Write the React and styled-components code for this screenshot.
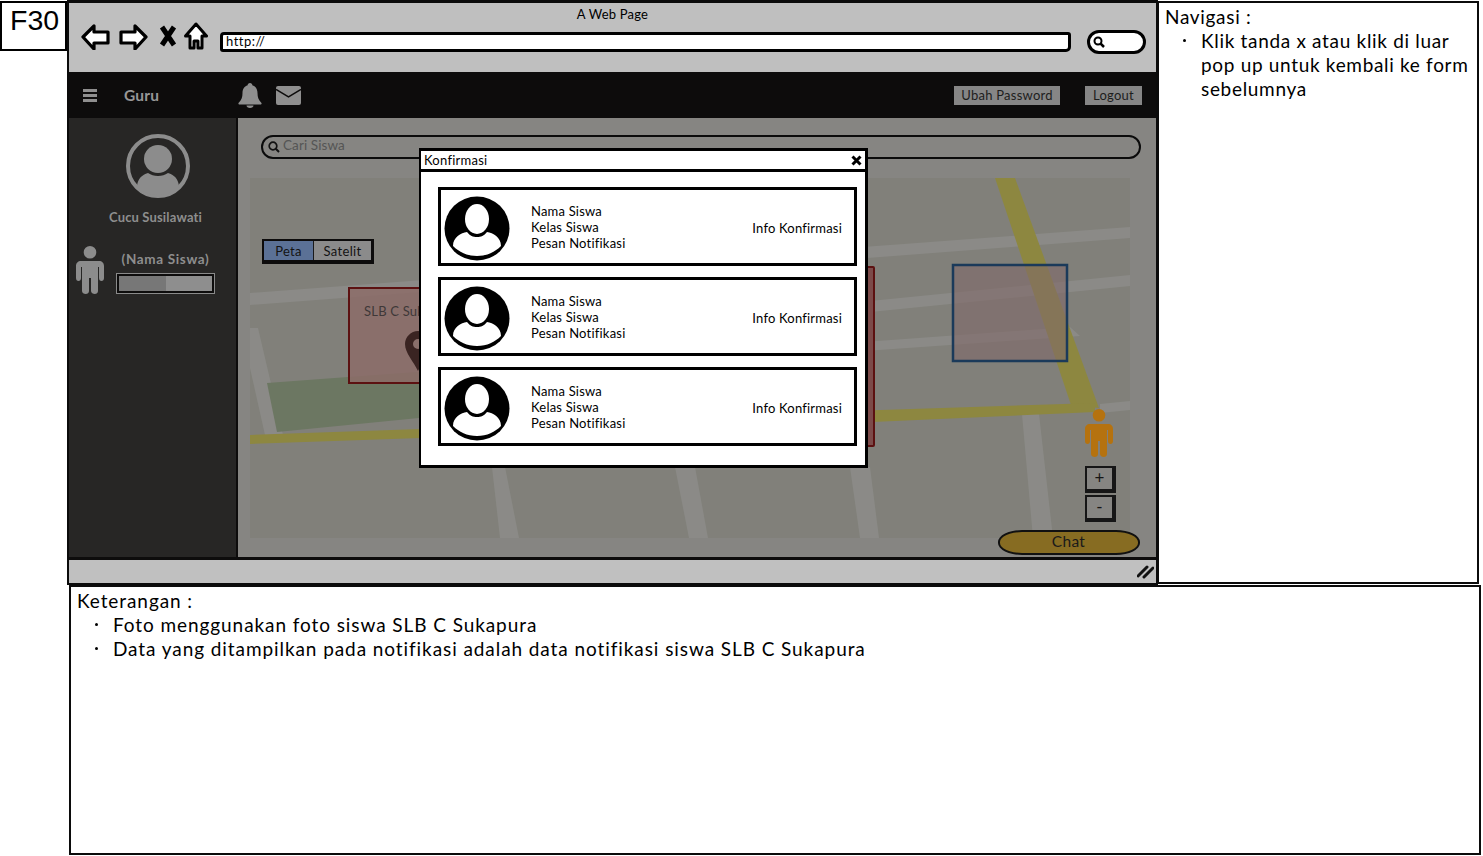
import React from "react";
import styled, { createGlobalStyle } from "styled-components";

const Global = createGlobalStyle`
  html, body { margin: 0; padding: 0; background: #fff; }
  body { font-family: "Lato", "Noto Sans", sans-serif; color: #000; overflow: hidden; }
`;

const Page = styled.div`
  width: 1483px;
  height: 856px;
  display: flex;
  flex-direction: column;
  background: #fff;
`;
const TopRow = styled.div`
  display: flex;
  height: 585px;
  align-items: flex-start;
`;
const Tag = styled.div`
  box-sizing: border-box;
  width: 67px;
  height: 50px;
  margin-top: 1px;
  border: 2px solid #000;
  font: 28.500px/30px "Liberation Sans", sans-serif;
  padding: 2px 0 0 8px;
`;
const Browser = styled.div`
  box-sizing: border-box;
  position: relative;
  width: 1091px;
  height: 585px;
  border: 2px solid #0b0b0b;
  display: flex;
  flex-direction: column;
`;
const TitleBar = styled.div`
  position: relative;
  box-sizing: border-box;
  height: 70px;
  background: #bfbfbf;
  display: flex;
  align-items: flex-start;
  padding: 21px 10px 0 12px;
  flex-shrink: 0;
  border-top: 1px solid #0b0b0b;
`;
const TitleText = styled.div`
  position: absolute;
  top: 3px;
  left: 0;
  right: 0;
  text-align: center;
  font-size: 13px;
  line-height: 16px;
  letter-spacing: 0.2px;
`;
const NavIcons = styled.div`
  display: flex;
  align-items: flex-start;
  width: 139px;
  flex-shrink: 0;
`;
const NavSvg = styled.svg`
  display: block;
  flex-shrink: 0;
  margin-right: ${(p) => p.$gap || 0}px;
`;
const UrlBar = styled.div`
  box-sizing: border-box;
  width: 852px;
  height: 20px;
  margin-top: 8px;
  background: #fff;
  border: 3px solid #000;
  border-radius: 4px 3px 5px 3px;
  font: 13px/13px "Lato", sans-serif;
  padding-left: 3px;
  letter-spacing: 0.5px;
`;
const SearchPill = styled.div`
  box-sizing: border-box;
  width: 59px;
  height: 24px;
  margin: 6px 0 0 16px;
  background: #fff;
  border: 3px solid #000;
  border-radius: 13px;
  display: flex;
  align-items: center;
  padding-left: 3px;
`;
const AppBar = styled.div`
  box-sizing: border-box;
  height: 46px;
  background: #0d0c0c;
  display: flex;
  align-items: center;
  padding: 0 14px 0 14px;
  flex-shrink: 0;
`;
const Burger = styled.div`
  width: 14px;
  display: flex;
  flex-direction: column;
  gap: 2px;
  margin-top: 1px;
  span { display: block; height: 3px; background: #8f8f8f; }
`;
const Brand = styled.div`
  margin-left: 27px;
  width: 114px;
  color: #979797;
  font-size: 15.500px;
  font-weight: 700;
  letter-spacing: 0.2px;
`;
const BarIcons = styled.div`
  display: flex;
  align-items: center;
  gap: 14px;
  flex: 1;
`;
const BarButton = styled.div`
  box-sizing: border-box;
  height: 19px;
  background: #868686;
  color: #1d1d1d;
  font-size: 13px;
  line-height: 19px;
  text-align: center;
  width: ${(p) => p.$w}px;
  margin-left: ${(p) => p.$ml}px;
  letter-spacing: 0.25px;
`;
const Body = styled.div`
  flex: 1;
  display: flex;
  min-height: 0;
`;
const Sidebar = styled.div`
  box-sizing: border-box;
  width: 169px;
  background: #272625;
  border-right: 2px solid #0d0c0c;
  display: flex;
  flex-direction: column;
  flex-shrink: 0;
  padding-top: 16px;
`;
const SideAvatar = styled.div`
  display: flex;
  justify-content: center;
  padding-left: 10px;
`;
const SideName = styled.div`
  text-align: center;
  color: #8e8e8e;
  font-size: 13px;
  font-weight: 700;
  line-height: 16px;
  margin-top: 11px;
  padding-left: 6px;
  letter-spacing: 0.15px;
`;
const StudentRow = styled.div`
  display: flex;
  align-items: flex-start;
  margin-top: 21px;
  padding-left: 7px;
`;
const StudentInfo = styled.div`
  margin-left: 13px;
  width: 97px;
`;
const StudentName = styled.div`
  text-align: center;
  color: #8e8e8e;
  font-size: 13.500px;
  font-weight: 700;
  line-height: 16px;
  margin-top: 5px;
  letter-spacing: 0.65px;
`;
const Progress = styled.div`
  box-sizing: border-box;
  height: 19px;
  margin-top: 7px;
  border: 2px solid #0d0c0c;
  outline: 1px solid #8a8a8a;
  background: #8e8e8e;
  span { display: block; height: 100%; width: 50%; background: #777; }
`;
const Main = styled.div`
  flex: 1;
  background: #868582;
  box-sizing: border-box;
  padding: 17px 15px 0 23px;
  display: flex;
  flex-direction: column;
  min-width: 0;
`;
const SearchField = styled.div`
  box-sizing: border-box;
  height: 24px;
  border: 2px solid #0b0b0b;
  border-radius: 12px;
  display: flex;
  align-items: center;
  padding-left: 5px;
  gap: 3px;
  color: #555;
  font-size: 13.500px;
  letter-spacing: 0.1px;
  span { margin-top: -4px; }
`;
const MapCanvas = styled.div`
  position: relative;
  width: 880px;
  height: 360px;
  margin: 19px 0 0 -11px;
  flex-shrink: 0;
`;
const MapArt = styled.svg`
  position: absolute;
  inset: 0;
  display: block;
`;
const Tabs = styled.div`
  position: absolute;
  left: 12px;
  top: 61px;
  display: flex;
  box-sizing: border-box;
  height: 25px;
  border: 2px solid #0d0c0c;
  border-width: 2px 3px 4px 2px;
  font-size: 13px;
  letter-spacing: 0.3px;
`;
const Tab = styled.div`
  box-sizing: border-box;
  width: ${(p) => p.$w}px;
  background: ${(p) => (p.$on ? "#5b7196" : "#8b8b8b")};
  color: #131313;
  text-align: center;
  line-height: 20px;
  border-left: ${(p) => (p.$on ? "none" : "1px solid #1a1a1a")};
`;
const SchoolBlock = styled.div`
  position: absolute;
  left: 98px;
  top: 109px;
  box-sizing: border-box;
  width: 131px;
  height: 97px;
  border: 2px solid #5c1111;
  background: rgba(140, 108, 104, 0.85);
  color: #3e3838;
  font: 13px/16px "Lato", sans-serif;
  padding: 14px 0 0 14px;
  letter-spacing: 0.2px;
  overflow: hidden;
`;
const Pin = styled.svg`
  position: absolute;
  left: 55px;
  top: 42px;
`;
const SideBlock = styled.div`
  position: absolute;
  left: 560px;
  top: 88px;
  box-sizing: border-box;
  width: 65px;
  height: 181px;
  border: 2px solid #5c1111;
  border-radius: 2px;
  background: #7c4b4a;
`;
const Walker = styled.svg`
  position: absolute;
  left: 835px;
  top: 231px;
`;
const ZoomBtn = styled.div`
  position: absolute;
  left: 835px;
  top: ${(p) => p.$top}px;
  box-sizing: border-box;
  width: 31px;
  height: 27px;
  background: #868582;
  border: 2px solid #161616;
  border-width: 2px 4px 4px 2px;
  text-align: center;
  font-size: 17px;
  line-height: 20px;
  color: #161616;
`;
const ChatPill = styled.div`
  position: absolute;
  left: 748px;
  top: 352px;
  box-sizing: border-box;
  width: 142px;
  height: 25px;
  background: #876c22;
  border: 2px solid #111;
  border-radius: 24px / 12px;
  text-align: center;
  font-size: 15.500px;
  line-height: 18px;
  color: #1a1a1a;
  letter-spacing: 0.3px;
  padding-right: 1px;
`;
const StatusBar = styled.div`
  box-sizing: border-box;
  height: 26px;
  background: #c0c0c0;
  border-top: 3px solid #0d0c0c;
  display: flex;
  justify-content: flex-end;
  align-items: center;
  padding-right: 2px;
  flex-shrink: 0;
`;
const Modal = styled.div`
  position: absolute;
  left: 350px;
  top: 146px;
  box-sizing: border-box;
  width: 449px;
  height: 320px;
  background: #fff;
  border: 3px solid #000;
  border-width: 3px 3px 3px 2px;
`;
const ModalHead = styled.div`
  box-sizing: border-box;
  height: 21px;
  border-bottom: 3px solid #000;
  display: flex;
  align-items: center;
  justify-content: space-between;
  padding: 0 3px 0 3px;
  font-size: 13px;
  letter-spacing: 0.25px;
`;
const ModalList = styled.div`
  display: flex;
  flex-direction: column;
  gap: 11px;
  padding: 15px 8px 0 17px;
`;
const Item = styled.div`
  box-sizing: border-box;
  height: 79px;
  border: 3px solid #000;
  display: flex;
  align-items: center;
  padding-left: 3px;
`;
const AvatarSvg = styled.svg`
  flex-shrink: 0;
  margin-top: 3px;
`;
const ItemText = styled.div`
  margin-left: 21px;
  flex: 1;
  font-size: 13px;
  line-height: 16px;
  letter-spacing: 0.2px;
`;
const ItemInfo = styled.div`
  font-size: 13px;
  letter-spacing: 0.2px;
  padding: 2px 12px 0 0;
`;
const Notes = styled.div`
  box-sizing: border-box;
  width: 321px;
  height: 583px;
  margin-top: 1px;
  border: 2px solid #0b0b0b;
  border-left-width: 1px;
  padding: 2px 0 0 6px;
  font-size: 19px;
  line-height: 24px;
  letter-spacing: 0.68px;
`;
const BottomPanel = styled.div`
  box-sizing: border-box;
  width: 1412px;
  height: 270px;
  margin-left: 69px;
  border: 2px solid #0b0b0b;
  padding: 2px 0 0 6px;
  font-size: 19px;
  line-height: 24px;
  letter-spacing: 0.92px;
`;
const Bullets = styled.ul`
  list-style: none;
  margin: 0;
  padding: 0 0 0 36px;
  li { position: relative; }
  li::before {
    content: "";
    position: absolute;
    left: -18px;
    top: 10px;
    width: 3px;
    height: 3px;
    border-radius: 50%;
    background: #000;
  }
`;

const Avatar = () => (
  <AvatarSvg width="66" height="65" viewBox="0 0 66 65">
    <ellipse cx="33" cy="32.500" rx="32.500" ry="32" fill="#000" />
    <ellipse cx="33" cy="23" rx="12" ry="15" fill="#fff" />
    <path d="M9 50c0-9 8-13 14-14 3 4 6 5 10 5s7-1 10-5c6 1 14 5 14 14-6 6-14 10-24 10S15 56 9 50z" fill="#fff" />
  </AvatarSvg>
);

const PersonPath = "M14 0a6.300 6.300 0 1 1 0 12.600A6.300 6.300 0 0 1 14 0zM5 15h18c3 0 5 2 5 5v12c0 2-1 3-2.500 3S23 34 23 32V21h-1v24c0 2-1.500 3-3.200 3S15 47 15 45V32h-2v13c0 2-1.500 3-3.300 3S6 47 6 45V21H5v11c0 2-1 3-2.500 3S0 34 0 32V20c0-3 2-5 5-5z";

const Row = () => (
  <Item>
    <Avatar />
    <ItemText>
      Nama Siswa<br />Kelas Siswa<br />Pesan Notifikasi
    </ItemText>
    <ItemInfo>Info Konfirmasi</ItemInfo>
  </Item>
);

export default function App() {
  return (
    <Page>
      <Global />
      <TopRow>
        <Tag>F30</Tag>
        <Browser>
          <TitleBar>
            <TitleText>A Web Page</TitleText>
            <NavIcons>
              <NavSvg $gap={9} width="29" height="26" viewBox="0 0 29 26">
                <path d="M2 13 13 2v6h14v11H13v6z" fill="#fff" stroke="#000" strokeWidth="3.200" strokeLinejoin="round" />
              </NavSvg>
              <NavSvg $gap={11} width="29" height="26" viewBox="0 0 29 26">
                <path d="M27 13 16 2v6H2v11h14v6z" fill="#fff" stroke="#000" strokeWidth="3.200" strokeLinejoin="round" />
              </NavSvg>
              <NavSvg $gap={7} width="18" height="26" viewBox="0 0 18 26">
                <path d="M3 3l12 18M15 3 3 21" stroke="#000" strokeWidth="5" fill="none" />
              </NavSvg>
              <NavSvg width="24" height="28" viewBox="0 0 24 28" style={{ marginTop: -2 }}>
                <path d="M12 2 22.500 14H18v12h-4v-7h-4v7H6V14H1.500z" fill="#fff" stroke="#000" strokeWidth="3" strokeLinejoin="round" />
              </NavSvg>
            </NavIcons>
            <UrlBar>http://</UrlBar>
            <SearchPill>
              <svg width="12" height="12" viewBox="0 0 12 12">
                <circle cx="5" cy="5" r="3.500" fill="none" stroke="#000" strokeWidth="2" />
                <path d="M7.500 7.500 11 11" stroke="#000" strokeWidth="2.500" />
              </svg>
            </SearchPill>
          </TitleBar>
          <AppBar>
            <Burger><span /><span /><span /></Burger>
            <Brand>Guru</Brand>
            <BarIcons>
              <svg width="24" height="26" viewBox="0 0 24 26">
                <path d="M12 1c1.500 0 2.300 1 2.300 2.200C18 4.300 19.500 7.500 19.500 11c0 4.500 1 7 4 10 .3 1-.2 1.500-1 1.500h-21c-.8 0-1.300-.5-1-1.500 3-3 4-5.500 4-10 0-3.500 1.500-6.700 5.200-7.800C9.700 2 10.500 1 12 1zM8.500 23.500h7c0 1.500-1.500 2.500-3.500 2.500s-3.500-1-3.500-2.500z" fill="#8f8f8f" />
              </svg>
              <svg width="25" height="19" viewBox="0 0 25 19">
                <rect width="25" height="19" rx="2" fill="#8f8f8f" />
                <path d="M0 3.500 12.500 11 25 3.500" fill="none" stroke="#0d0c0c" strokeWidth="1.500" />
              </svg>
            </BarIcons>
            <BarButton $w={106}>Ubah Password</BarButton>
            <BarButton $w={57} $ml={25}>Logout</BarButton>
          </AppBar>
          <Body>
            <Sidebar>
              <SideAvatar>
                <svg width="64" height="64" viewBox="0 0 64 64">
                  <circle cx="32" cy="32" r="30" fill="#272625" stroke="#8c8c8c" strokeWidth="4" />
                  <circle cx="32" cy="25" r="14" fill="#8c8c8c" />
                  <path d="M11 52c1-8 5-11 11-13 3 2 6 3 10 3s7-1 10-3c6 2 10 5 11 13-5 6-13 9-21 9s-16-3-21-9z" fill="#8c8c8c" />
                </svg>
              </SideAvatar>
              <SideName>Cucu Susilawati</SideName>
              <StudentRow>
                <svg width="28" height="48" viewBox="0 0 28 48"><path d={PersonPath} fill="#8c8c8c" /></svg>
                <StudentInfo>
                  <StudentName>(Nama Siswa)</StudentName>
                  <Progress><span /></Progress>
                </StudentInfo>
              </StudentRow>
            </Sidebar>
            <Main>
              <SearchField>
                <svg width="12" height="12" viewBox="0 0 12 12">
                  <circle cx="5" cy="5" r="3.800" fill="none" stroke="#111" strokeWidth="1.700" />
                  <path d="M7.800 7.800 11 11" stroke="#111" strokeWidth="2" />
                </svg>
                <span>Cari Siswa</span>
              </SearchField>
              <MapCanvas>
                <MapArt width="880" height="360" viewBox="0 0 880 360">
                  <rect width="880" height="360" fill="#81807a" />
                  <g fill="#8b8a87">
                    <path d="M0 115 880 49v11L0 127z" />
                    <path d="M600 125 880 97v11L600 136z" />
                    <path d="M600 165 820 149l10 9-230 16z" />
                    <path d="M850 226 880 223v9l-30 3z" />
                    <path d="M0 150h8l25 107H15L0 190z" />
                    <path d="M242 289h13l14 71h-19z" />
                    <path d="M425 289h20l13 71h-19z" />
                    <path d="M600 289h20l9 71h-19z" />
                    <path d="M772 236h17l14 124h-20z" />
                  </g>
                  <path d="M17 205 420 175v40L27 254z" fill="#6c7762" />
                  <path d="M0 257 200 250v9L0 266z" fill="#8d8740" />
                  <path d="M745 0h20l84 230-28-3z" fill="#8d8740" />
                  <path d="M600 233 845 225v9L600 245z" fill="#8d8740" />
                </MapArt>
                <SideBlock />
                <SchoolBlock>
                  SLB C Sukapura
                  <Pin width="26" height="40" viewBox="0 0 26 40">
                    <path d="M13 0c7 0 13 6 13 13 0 9-9 18-13 27C9 31 0 22 0 13 0 6 6 0 13 0zm0 8a5 5 0 1 0 0 10 5 5 0 0 0 0-10z" fill="#3a2422" />
                  </Pin>
                </SchoolBlock>
                <MapArt width="880" height="360" viewBox="0 0 880 360" style={{ pointerEvents: "none" }}>
                  <rect x="703" y="87" width="114" height="96" fill="rgba(128,105,105,.6)" stroke="#1b3a5a" strokeWidth="2.500" />
                </MapArt>
                <Tabs>
                  <Tab $on $w={49}>Peta</Tab>
                  <Tab $w={58}>Satelit</Tab>
                </Tabs>
                <Walker width="28" height="48" viewBox="0 0 28 48"><path d={PersonPath} fill="#b5720f" /></Walker>
                <ZoomBtn $top={288}>+</ZoomBtn>
                <ZoomBtn $top={317}>-</ZoomBtn>
                <ChatPill>Chat</ChatPill>
              </MapCanvas>
            </Main>
          </Body>
          <StatusBar>
            <svg width="17" height="14" viewBox="0 0 17 14">
              <path d="M1 11 10 2M7 12l9-9" stroke="#111" strokeWidth="3" strokeLinecap="round" />
            </svg>
          </StatusBar>
          <Modal>
            <ModalHead>
              <span>Konfirmasi</span>
              <svg width="11" height="11" viewBox="0 0 11 11">
                <path d="M1.500 1.500l8 8M9.500 1.500l-8 8" stroke="#000" strokeWidth="3" />
              </svg>
            </ModalHead>
            <ModalList>
              <Row /><Row /><Row />
            </ModalList>
          </Modal>
        </Browser>
        <Notes>
          Navigasi :
          <Bullets>
            <li>Klik tanda x atau klik di luar<br />pop up untuk kembali ke form<br />sebelumnya</li>
          </Bullets>
        </Notes>
      </TopRow>
      <BottomPanel>
        Keterangan :
        <Bullets>
          <li>Foto menggunakan foto siswa SLB C Sukapura</li>
          <li>Data yang ditampilkan pada notifikasi adalah data notifikasi siswa SLB C Sukapura</li>
        </Bullets>
      </BottomPanel>
    </Page>
  );
}
